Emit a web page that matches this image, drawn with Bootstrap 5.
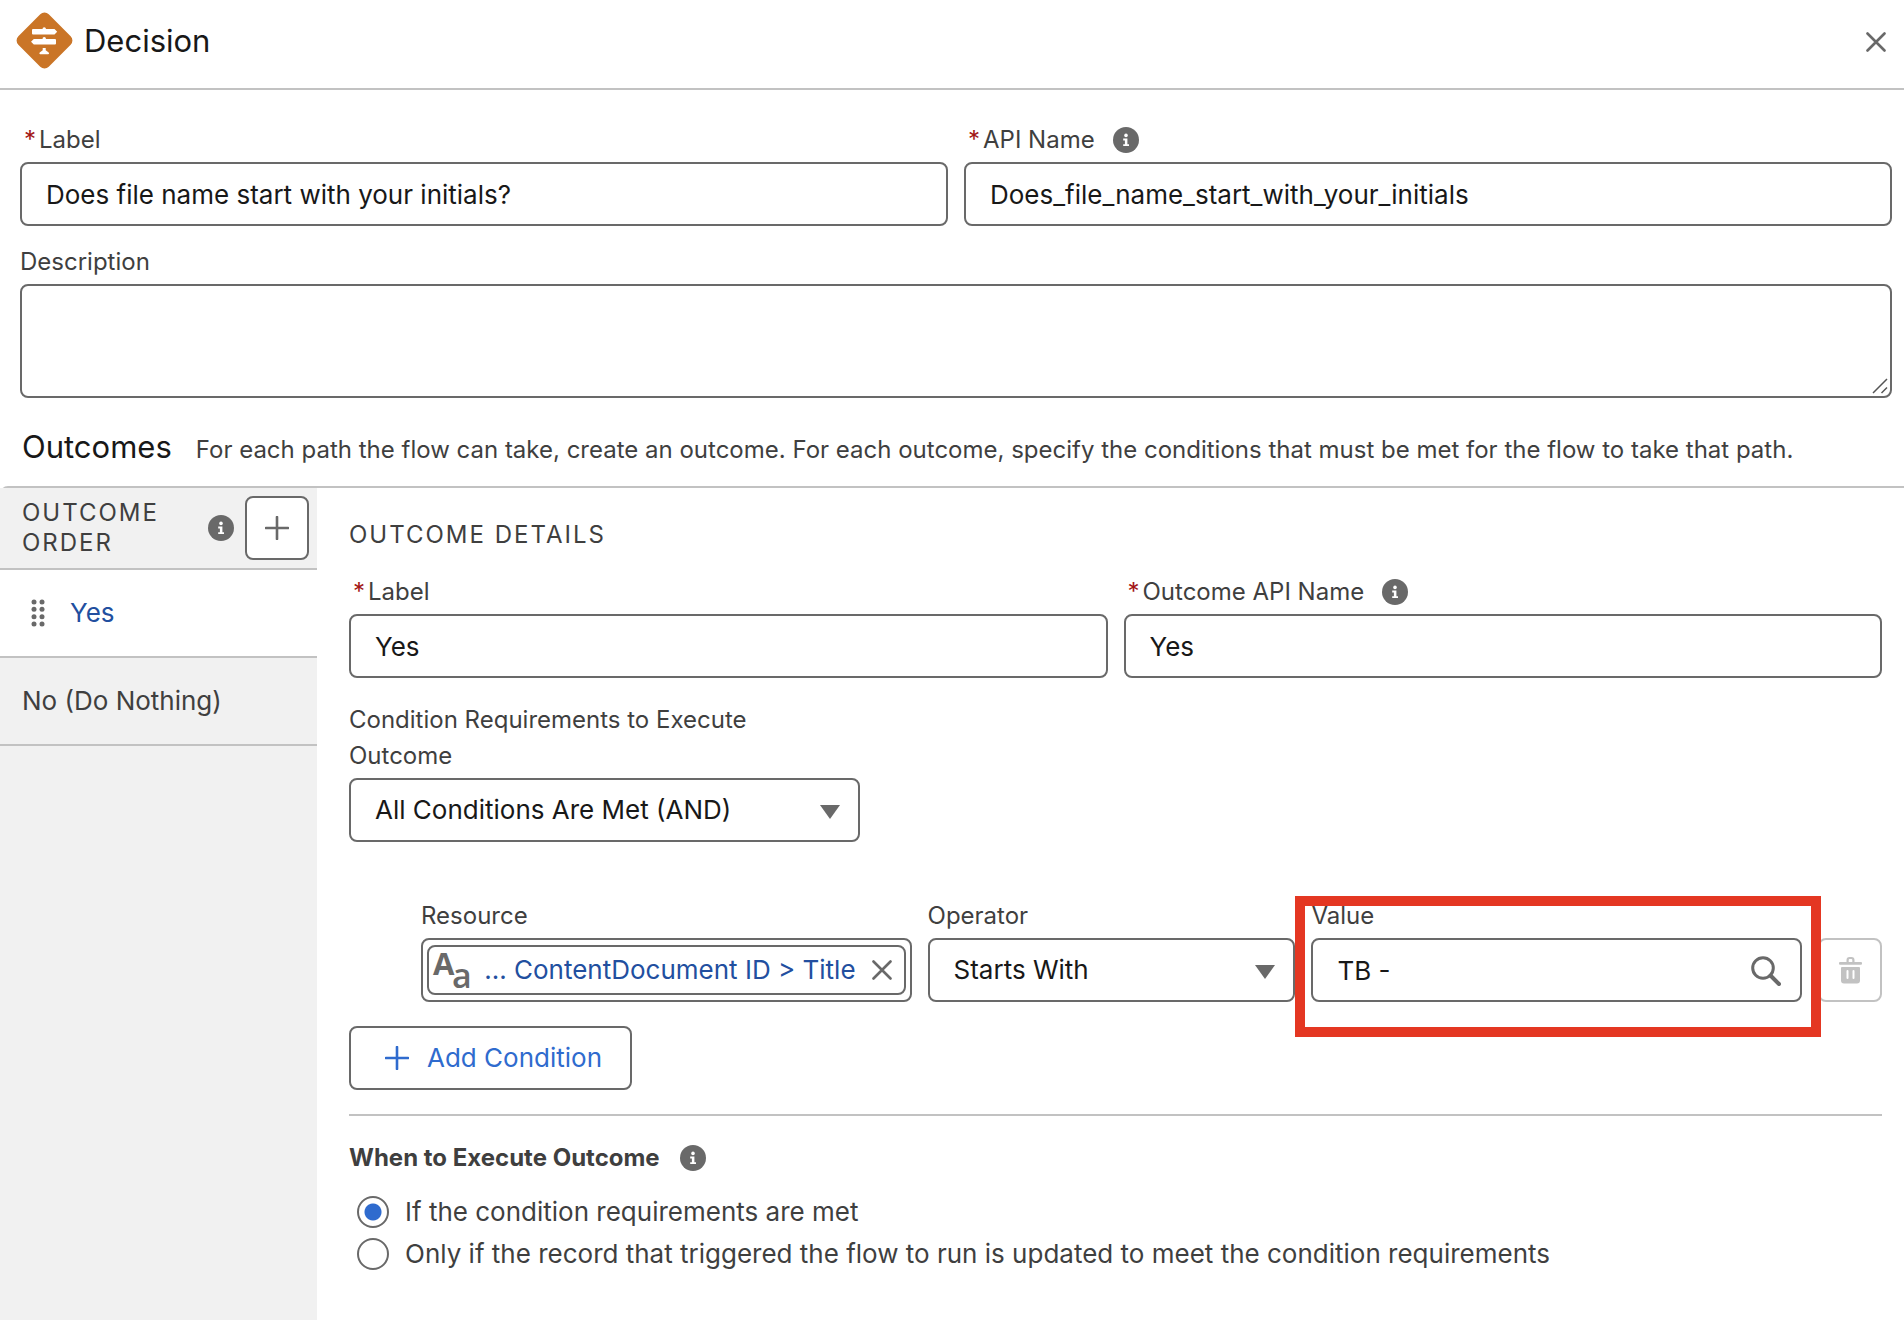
<!DOCTYPE html>
<html lang="en">
<head>
<meta charset="utf-8">
<meta name="viewport" content="width=device-width, initial-scale=1">
<title>Decision</title>
<link href="https://cdn.jsdelivr.net/npm/bootstrap@5.3.0/dist/css/bootstrap.min.css" rel="stylesheet">
<style>
  :root { --line: #c2c2c2; --stroke: #696969; --ink: #181818; --label: #3f3f3f; --link: #224f9f; --brand: #2f6bce; }
  body { font-family: Inter, "Liberation Sans", sans-serif; font-size: 26px; line-height: 36px; color: var(--label); background: #fff; }
  svg { display: block; flex: none; }
  .panel-head { height: 90px; border-bottom: 2px solid var(--line); padding: 0 18px 8px 16px; }
  .panel-head .brand-row { gap: 11px; }
  .panel-head h1, .outcomes-head h2 { font-size: 31px; line-height: 40px; font-weight: 400; color: var(--ink); }
  .panel-head h1 { padding-top: 2px; }
  .icon-btn { background: none; border: 0; padding: 0; color: var(--stroke); }
  .main-fields { padding: 32px 12px 0 20px; }
  .field-label { display: flex; align-items: center; font-size: 24px; line-height: 36px; margin-bottom: 4px; }
  .field-label .info-dot { margin-left: 18px; }
  .desc-label { margin-top: 18px; }
  .req { color: #a31616; width: 15px; margin-left: 4px; }
  .field-box { height: 64px; border: 2px solid var(--stroke); border-radius: 8px; padding: 0 24px; font-size: 26px; line-height: 36px; color: var(--ink); background-color: #fff; }
  select.field-box { background-image: url("data:image/svg+xml,%3Csvg xmlns='http://www.w3.org/2000/svg' viewBox='0 0 20 14'%3E%3Cpath d='M0 0h20L10 14z' fill='%23696969'/%3E%3C/svg%3E"); background-size: 20px 14px; background-position: right 18px top 25px; padding-right: 48px; }
  textarea.field-box { height: 114px; resize: none; background: #fff url("data:image/svg+xml,%3Csvg xmlns='http://www.w3.org/2000/svg' viewBox='0 0 16 16'%3E%3Cpath d='M1 15L15 1M9.500 15l5.500-5.500' stroke='%23555' stroke-width='1.5' fill='none'/%3E%3C/svg%3E") no-repeat right 2px bottom 2px / 16px 16px; }
  .gap-fields { gap: 16px; }
  .outcomes-head { padding: 29px 22px 18px; gap: 24px; }
  .outcomes-head p { font-size: 24px; line-height: 36px; }
  .work-area { border-top: 2px solid var(--line); border-top-left-radius: 8px; }
  .side { width: 317px; flex: none; background: #f1f1f1; }
  .side-head { height: 82px; border-bottom: 2px solid var(--line); padding: 0 8px 0 22px; }
  .side-tools { gap: 11px; }
  .caps { font-size: 24px; line-height: 30px; font-weight: 400; letter-spacing: 2px; text-transform: uppercase; }
  .square-btn { width: 64px; height: 64px; flex: none; background: #fff; border: 2px solid var(--stroke); border-radius: 8px; color: var(--stroke); padding: 0; }
  .square-btn:disabled { border-color: var(--line); color: var(--line); }
  .side-item { height: 88px; border-bottom: 2px solid var(--line); padding: 0 22px; }
  .side-item a { color: inherit; text-decoration: none; }
  .side-item.current { background: #fff; color: var(--link); }
  .details { padding: 32px 22px 0 32px; min-width: 0; }
  .details .caps { margin-bottom: 24px; }
  .narrow-field { width: 511px; margin-top: 24px; }
  .cond-row { margin: 56px 0 24px; padding-left: 72px; }
  .col-wide { flex: 4 1 0; min-width: 0; }
  .col-mid { flex: 3 1 0; min-width: 0; }
  .pill-box { padding: 5px 4px; }
  .pill { height: 50px; border: 2px solid var(--stroke); border-radius: 8px; padding: 0 12px 0 4px; }
  .pill svg { overflow: visible; }
  .pill-text { color: var(--link); background: none; border: 0; padding: 0; white-space: nowrap; }
  .search-icon { position: absolute; right: 21px; bottom: 16px; color: var(--stroke); }
  .highlight { position: absolute; inset: -2px -19px -35px -16px; border: 10px solid #e43722; pointer-events: none; z-index: 2; }
  .add-btn { height: 64px; border: 2px solid var(--stroke); border-radius: 8px; background: #fff; color: var(--brand); padding: 0 28px 0 34px; gap: 18px; }
  .rule { border-top: 2px solid var(--line); margin: 24px 0; }
  .when { border: 0; }
  .when legend { font-size: 24px; line-height: 36px; font-weight: 700; gap: 20px; margin: 0 0 15px; float: none; }
  .option { height: 42px; padding-left: 8px; gap: 16px; }
  .option input { appearance: none; width: 32px; height: 32px; border: 2px solid var(--stroke); border-radius: 50%; margin: 0; background: #fff; flex: none; }
  .option input:checked { background: radial-gradient(circle, var(--brand) 8px, #fff 9px); }
</style>
</head>
<body>
<svg width="0" height="0" class="position-absolute" aria-hidden="true">
  <symbol id="info" viewBox="0 0 26 26"><circle cx="13" cy="13" r="13" fill="#696969"/><circle cx="13" cy="8.4" r="1.8" fill="#fff"/><path d="M10.2 11.4h4.2v5.8h1.6v1.9h-5.8v-1.9h1.7v-3.8h-1.7z" fill="#fff"/></symbol>
  <symbol id="plus" viewBox="0 0 24 24"><path d="M12 1v22M1 12h22" stroke="currentColor" stroke-width="2.6" stroke-linecap="round"/></symbol>
  <symbol id="cross" viewBox="0 0 20 20"><path d="M1.5 1.5l17 17M18.5 1.5l-17 17" stroke="currentColor" stroke-width="2.6" stroke-linecap="round"/></symbol>
</svg>
<div class="d-flex flex-column min-vh-100">
  <header class="panel-head d-flex align-items-center justify-content-between">
    <div class="brand-row d-flex align-items-center">
      <svg width="57" height="57" viewBox="0 0 57 57" aria-hidden="true">
        <rect x="7" y="7" width="43" height="43" rx="6" transform="rotate(45 28.5 28.5)" fill="#ca7527"/>
        <path d="M17 17h9.500q0-1.700 1.700-1.700T30 17h8.500l2.700 2.700-2.700 2.700H17q-1 0-1-1V18q0-1 1-1zM17.800 27h8.700q0-2 1.700-2T30 27h9q1 0 1 1v3.400q0 1-1 1H17.800L15 29.700zM26.700 36h3v2.200l3 2.300q1 1.700-.500 1.700h-8q-1.500 0-.500-1.700l3-2.300z" fill="#fff"/>
      </svg>
      <h1 class="m-0">Decision</h1>
    </div>
    <button class="icon-btn mt-1" type="button" aria-label="Close"><svg width="20" height="20"><use href="#cross"/></svg></button>
  </header>

  <section class="main-fields">
    <div class="d-flex gap-fields">
      <div class="flex-fill w-50">
        <label class="field-label" for="label"><span class="req">*</span>Label</label>
        <input class="form-control field-box" id="label" type="text" value="Does file name start with your initials?">
      </div>
      <div class="flex-fill w-50">
        <label class="field-label" for="api"><span class="req">*</span>API Name<svg class="info-dot" width="26" height="26"><use href="#info"/></svg></label>
        <input class="form-control field-box" id="api" type="text" value="Does_file_name_start_with_your_initials">
      </div>
    </div>
    <label class="field-label desc-label" for="desc">Description</label>
    <textarea class="form-control field-box" id="desc"></textarea>
  </section>

  <div class="outcomes-head d-flex align-items-baseline">
    <h2 class="m-0">Outcomes</h2>
    <p class="m-0">For each path the flow can take, create an outcome. For each outcome, specify the conditions that must be met for the flow to take that path.</p>
  </div>

  <div class="work-area d-flex flex-grow-1">
    <nav class="side" aria-label="Outcome order">
      <div class="side-head d-flex align-items-center justify-content-between">
        <h3 class="caps m-0">Outcome<br>Order</h3>
        <div class="side-tools d-flex align-items-center">
          <svg width="26" height="26"><use href="#info"/></svg>
          <button class="square-btn d-flex align-items-center justify-content-center" type="button" aria-label="Add outcome"><svg width="24" height="24"><use href="#plus"/></svg></button>
        </div>
      </div>
      <div class="side-item current d-flex align-items-center">
        <svg class="ms-2 me-4" width="16" height="28" viewBox="0 0 16 28" fill="#696969" aria-hidden="true"><circle cx="4" cy="3" r="2.500"/><circle cx="12" cy="3" r="2.500"/><circle cx="4" cy="10.300" r="2.500"/><circle cx="12" cy="10.300" r="2.500"/><circle cx="4" cy="17.700" r="2.500"/><circle cx="12" cy="17.700" r="2.500"/><circle cx="4" cy="25" r="2.500"/><circle cx="12" cy="25" r="2.500"/></svg>
        <a href="#">Yes</a>
      </div>
      <div class="side-item d-flex align-items-center"><a href="#">No (Do Nothing)</a></div>
    </nav>

    <main class="details flex-grow-1">
      <h3 class="caps">Outcome Details</h3>
      <div class="d-flex gap-fields">
        <div class="flex-fill w-50">
          <label class="field-label" for="olabel"><span class="req">*</span>Label</label>
          <input class="form-control field-box" id="olabel" type="text" value="Yes">
        </div>
        <div class="flex-fill w-50">
          <label class="field-label" for="oapi"><span class="req">*</span>Outcome API Name<svg class="info-dot" width="26" height="26"><use href="#info"/></svg></label>
          <input class="form-control field-box" id="oapi" type="text" value="Yes">
        </div>
      </div>

      <div class="narrow-field">
        <label class="field-label" for="logic">Condition Requirements to Execute<br>Outcome</label>
        <select class="form-select field-box" id="logic"><option>All Conditions Are Met (AND)</option></select>
      </div>

      <div class="cond-row d-flex align-items-end gap-fields">
        <div class="col-wide">
          <label class="field-label" for="resource">Resource</label>
          <div class="field-box pill-box">
            <div class="pill d-flex align-items-center justify-content-between">
              <svg width="38" height="40" viewBox="0 0 38 40" font-family="Open Sans, sans-serif" fill="#696969" aria-hidden="true"><text x="0" y="25" font-size="31" font-weight="700">A</text><text x="19" y="38" font-size="34" font-weight="600">a</text></svg>
              <button class="pill-text ms-auto me-3" id="resource" type="button">... ContentDocument ID &gt; Title</button>
              <button class="icon-btn" type="button" aria-label="Remove"><svg width="20" height="20"><use href="#cross"/></svg></button>
            </div>
          </div>
        </div>
        <div class="col-mid">
          <label class="field-label" for="operator">Operator</label>
          <select class="form-select field-box" id="operator"><option>Starts With</option></select>
        </div>
        <div class="col-wide position-relative">
          <label class="field-label" for="value">Value</label>
          <input class="form-control field-box" id="value" type="text" value="TB -">
          <svg class="search-icon" width="30" height="30" viewBox="0 0 30 30" fill="none" stroke="currentColor" aria-hidden="true"><circle cx="12" cy="12" r="10.300" stroke-width="3"/><path d="M19.500 19.500l8.500 8.500" stroke-width="4" stroke-linecap="round"/></svg>
          <div class="highlight"></div>
        </div>
        <button class="square-btn d-flex align-items-center justify-content-center" type="button" disabled aria-label="Delete condition">
          <svg width="23" height="27" viewBox="0 0 23 27"><path d="M7.500 5V3q0-3 3-3h2q3 0 3 3v2H22q1 0 1 1v.800q0 1-1 1H1q-1 0-1-1V6q0-1 1-1zm2.200 0h3.600V3q0-1-1-1h-1.600q-1 0-1 1zM2 11q0-1 1-1h17q1 0 1 1v12.500q0 3-3 3H5q-3 0-3-3zm5.500 3v7q0 1 1 1t1-1v-7q0-1-1-1t-1 1zm6 0v7q0 1 1 1t1-1v-7q0-1-1-1t-1 1z" fill="currentColor" fill-rule="evenodd"/></svg>
        </button>
      </div>

      <button class="add-btn d-inline-flex align-items-center" type="button"><svg width="24" height="24"><use href="#plus"/></svg>Add Condition</button>
      <div class="rule"></div>

      <fieldset class="when">
        <legend class="d-flex align-items-center">When to Execute Outcome<svg width="26" height="26"><use href="#info"/></svg></legend>
        <div class="option d-flex align-items-center"><input type="radio" name="when" id="w1" checked><label for="w1">If the condition requirements are met</label></div>
        <div class="option d-flex align-items-center"><input type="radio" name="when" id="w2"><label for="w2">Only if the record that triggered the flow to run is updated to meet the condition requirements</label></div>
      </fieldset>
    </main>
  </div>
</div>
<script src="https://cdn.jsdelivr.net/npm/bootstrap@5.3.0/dist/js/bootstrap.bundle.min.js"></script>
</body>
</html>
